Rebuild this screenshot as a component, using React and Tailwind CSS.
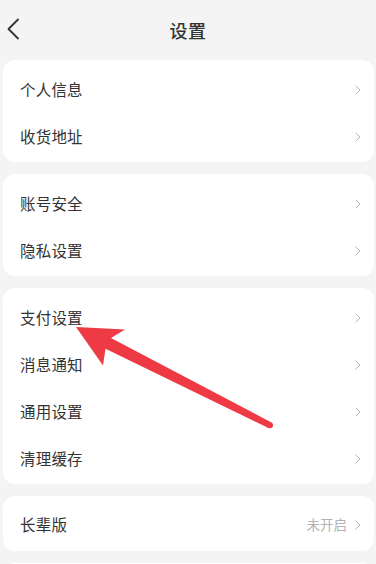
import React from 'react';

const groups = [
    ['个人信息', '收货地址'],
    ['账号安全', '隐私设置'],
    ['支付设置', '消息通知', '通用设置', '清理缓存'],
];

const Chevron = () => (
    <svg viewBox="0 0 6 10" className="w-[6px] h-[10px]" fill="none">
        <path d="M1 1L5 5L1 9" stroke="#b5b5b5" strokeWidth="1" strokeLinecap="round" strokeLinejoin="round" />
    </svg>
);

const Row = ({ label, value }) => (
    <div className="h-[47px] flex items-center justify-between pl-[17px] pr-[13px]">
        <span className="text-[15.5px] text-[#333333] tracking-[0.2px]">{label}</span>
        <div className="flex items-center gap-[8px]">
            {value && <span className="text-[13.5px] text-[#b3b3b3]">{value}</span>}
            <Chevron />
        </div>
    </div>
);

const App = () => {
    return (
        <div
            className="relative w-[376px] h-[564px] overflow-hidden bg-[#f4f4f4]"
            style={{ fontFamily: '"Noto Sans CJK SC", "Noto Sans", sans-serif' }}
        >
            <header className="relative h-[60px] flex items-center justify-center">
                <button className="absolute left-[6px] top-[18px] p-0">
                    <svg viewBox="0 0 14 22" className="w-[14px] h-[22px]" fill="none">
                        <path d="M12 1.5L2.5 11L12 20.5" stroke="#333333" strokeWidth="1.8" strokeLinecap="round" strokeLinejoin="round" />
                    </svg>
                </button>
                <h1 className="text-[18px] font-medium text-[#333333] tracking-[0.5px]">设置</h1>
            </header>

            <div className="flex flex-col gap-[12px] ml-[3px] mr-[2px]">
                {groups.map((g, i) => (
                    <section key={i} className="bg-white rounded-[12px] pt-[6px] pb-[2px]">
                        {g.map(label => <Row key={label} label={label} />)}
                    </section>
                ))}
                <section className="bg-white rounded-[12px] pt-[5px] pb-[3px]">
                    <Row label="长辈版" value="未开启" />
                </section>
                <section className="bg-white rounded-[12px] h-[40px]" />
            </div>

            <svg className="absolute left-0 top-0 pointer-events-none" width="376" height="564" viewBox="0 0 376 564">
                <polygon
                    points="76,327 125,329.5 111,338 271.5,422.5 268.5,428 105.5,348.8 103,365.5"
                    fill="#ee3a44"
                    strokeLinejoin="round"
                />
                <circle cx="270" cy="425.3" r="3" fill="#ee3a44" />
            </svg>
        </div>
    );
};

export default App;
